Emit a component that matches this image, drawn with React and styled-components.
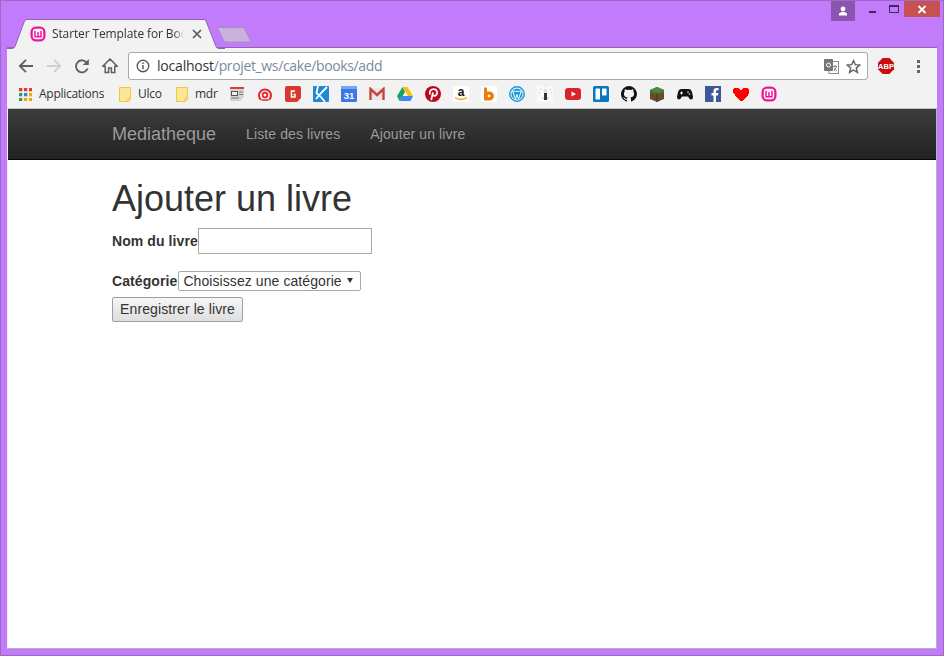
import React from "react";
import styled, { createGlobalStyle } from "styled-components";

const Global = createGlobalStyle`
  html, body { margin: 0; padding: 0; background: #c27cfb; }
  * { box-sizing: border-box; }
`;

const Frame = styled.div`
  width: 944px;
  height: 656px;
  display: flex;
  flex-direction: column;
  background: #c27cfb;
  border: 1px solid #9a6bc4;
  padding: 0 6px 6px;
  overflow: hidden;
`;

const TitleBar = styled.div`
  height: 46px;
  flex: none;
  display: flex;
  align-items: flex-start;
`;

const TabStrip = styled.div`
  display: flex;
  align-items: flex-start;
  margin-top: 18px;
  position: relative;
  z-index: 1;
`;

const Tab = styled.div`
  position: relative;
  width: 218px;
  height: 30px;
  display: flex;
  align-items: center;
  padding: 0 0 1px 23px;
`;

const TabShape = styled.svg`
  position: absolute;
  left: 0;
  top: 0;
`;

const TabFavicon = styled.span`
  position: relative;
  flex: none;
  display: flex;
`;

const TabTitle = styled.span`
  position: relative;
  margin-left: 6px;
  width: 132px;
  overflow: hidden;
  white-space: nowrap;
  font: 12px "Open Sans", sans-serif;
  letter-spacing: -0.12px;
  color: #333;
  -webkit-mask-image: linear-gradient(90deg, #000 122px, transparent 132px);
  mask-image: linear-gradient(90deg, #000 122px, transparent 132px);
`;

const TabClose = styled.svg`
  position: relative;
  margin-left: 8px;
  flex: none;
`;

const NewTab = styled.svg`
  margin: 7px 0 0 -8px;
  flex: none;
`;

const WindowControls = styled.div`
  margin-left: auto;
  margin-right: -3px;
  display: flex;
  align-items: flex-start;
`;

const ProfileButton = styled.div`
  width: 24px;
  height: 20px;
  background: #8a55b0;
  display: flex;
  align-items: center;
  justify-content: center;
  margin-right: 14px;
`;

const Minimize = styled.div`
  width: 7px;
  height: 2px;
  background: #3c2a5e;
  margin: 10px 13px 0 0;
`;

const Maximize = styled.div`
  width: 10px;
  height: 8px;
  border: 1px solid #3c2a5e;
  border-top-width: 2px;
  margin: 4px 5px 0 0;
`;

const CloseButton = styled.div`
  width: 36px;
  height: 16px;
  background: #c75050;
  display: flex;
  align-items: center;
  justify-content: center;
`;

const Browser = styled.div`
  flex: 1;
  display: flex;
  flex-direction: column;
  min-height: 0;
`;

const Toolbar = styled.div`
  height: 33px;
  flex: none;
  background: #f2f2f2;
  border-top: 1px solid #8e63b4;
  display: flex;
  align-items: flex-start;
  padding: 4px 0 0 0;
`;

const NavIcon = styled.svg`
  flex: none;
  margin-top: ${(p) => (p.$mt === undefined ? 6 : p.$mt)}px;
  margin-left: ${(p) => p.$ml || 0}px;
`;

const Omnibox = styled.div`
  width: 740px;
  height: 28px;
  margin-left: 10px;
  background: #fff;
  border: 1px solid #a9a9a9;
  border-radius: 3px;
  display: flex;
  align-items: center;
  padding-left: 7px;
`;

const Url = styled.div`
  margin-left: 7px;
  padding-bottom: 2px;
  flex: 1;
  font: 14px "Open Sans", sans-serif;
  letter-spacing: -0.36px;
  color: #7d8a99;
  white-space: nowrap;
`;

const Host = styled.span`
  color: #333;
  letter-spacing: -0.2px;
`;

const OmniIcon = styled.svg`
  flex: none;
  margin-right: ${(p) => p.$mr || 0}px;
`;

const Bookmarks = styled.div`
  height: 29px;
  flex: none;
  background: #f2f2f2;
  display: flex;
  align-items: center;
  padding: 0 0 0 12px;
  border-bottom: 1px solid #c4c4c4;
`;

const BookmarkText = styled.span`
  font: 12px "Open Sans", sans-serif;
  letter-spacing: -0.27px;
  color: #333;
  padding-bottom: 1px;
  margin-left: ${(p) => p.$ml}px;
  width: ${(p) => p.$w}px;
`;

const Fav = styled.svg`
  flex: none;
  margin-right: ${(p) => (p.$mr === undefined ? 12 : p.$mr)}px;
`;

const FavBox = styled.span`
  display: flex;
  flex: none;
`;

const Page = styled.div`
  flex: 1;
  min-height: 0;
  background: #fff;
  border-left: 1px solid #f0f0f0;
  border-right: 1px solid #b4b4b4;
  border-bottom: 1px solid #b4b4b4;
  font-family: "Liberation Sans", Arial, sans-serif;
  font-size: 14px;
  color: #333;
`;

const Navbar = styled.nav`
  height: 51px;
  padding-left: 104px;
  display: flex;
  align-items: center;
  background: linear-gradient(180deg, #3c3c3c 0%, #222 100%);
  border-bottom: 1px solid #080808;
`;

const Brand = styled.span`
  font-size: 18px;
  color: #9d9d9d;
  text-shadow: 0 -1px 0 rgba(0, 0, 0, 0.25);
  margin-right: 30px;
`;

const NavLink = styled.a`
  font-size: 14px;
  letter-spacing: 0.1px;
  color: #9d9d9d;
  margin-right: 30px;
  text-shadow: 0 -1px 0 rgba(0, 0, 0, 0.25);
`;

const Content = styled.main`
  padding-left: 104px;
`;

const Heading = styled.h1`
  margin: 20px 0 0;
  font-size: 36px;
  line-height: 38px;
  font-weight: 400;
  color: #333;
`;

const Field = styled.div`
  display: flex;
  align-items: center;
  margin-top: ${(p) => p.$mt}px;
`;

const Label = styled.label`
  font-weight: 700;
  letter-spacing: 0.09px;
`;

const TextInput = styled.input`
  width: 174px;
  height: 26px;
  padding: 1px 2px;
  border: 1px solid #a9a9a9;
  background: #fff;
  outline: none;
`;

const SelectWrap = styled.span`
  position: relative;
  display: flex;
  margin-left: 1px;
`;

const Select = styled.select`
  appearance: none;
  height: 20px;
  width: 183px;
  font: 14px "Liberation Sans", Arial, sans-serif;
  letter-spacing: 0.08px;
  color: #333;
  background: #fff;
  border: 1px solid #a9a9a9;
  border-radius: 2px;
  padding: 0 0 0 4px;
`;

const SelectArrow = styled.svg`
  position: absolute;
  right: 8px;
  top: 7px;
  pointer-events: none;
`;

const SubmitButton = styled.button`
  display: block;
  margin-top: 6px;
  width: 131px;
  height: 25px;
  padding: 0 0 2px;
  font: 14px "Liberation Sans", Arial, sans-serif;
  letter-spacing: 0.1px;
  color: #333;
  background: linear-gradient(180deg, #f6f6f6, #dedede);
  border: 1px solid #a0a0a0;
  border-radius: 2px;
`;

const WampIcon = ({ size = 16 }) => (
  <svg width={size} height={size} viewBox="0 0 16 16">
    <rect x="0.5" y="0.5" width="15" height="15" rx="5.5" fill="#f0139a" />
    <rect x="2.8" y="2.8" width="10.4" height="10.4" rx="3" fill="#fff" />
    <path d="M5 4.800v6h6v-6M8 6v4.800" fill="none" stroke="#f0139a" strokeWidth="1.5" />
  </svg>
);

const Folder = (p) => (
  <Fav {...p} width="12" height="16" viewBox="0 0 12 16">
    <path d="M.5 1.500h11v12l-2 2h-9z" fill="#fde694" stroke="#f0c74a" />
    <path d="M9 15v-3h2.500" fill="none" stroke="#f0c74a" />
  </Fav>
);

const APP_COLORS = ["#e53935", "#e53935", "#e53935", "#2f9e5b", "#2f80ed", "#f4a400", "#2f9e5b", "#f4a400", "#f4a400"];

export default function App() {
  return (
    <>
      <Global />
      <Frame>
        <TitleBar>
          <TabStrip>
            <Tab>
              <TabShape width="218" height="30" viewBox="0 0 218 30">
                <path d="M0 29.500h5q2 0 3-2L17.500 2Q18 .5 20 .5H197Q198.500 .5 199 2L209 27.500q1 2 3 2h6V30H0z" fill="#f2f2f2" />
                <path d="M0 29.500h5q2 0 3-2L17.500 2Q18 .5 20 .5H197Q198.500 .5 199 2L209 27.500q1 2 3 2h6" fill="none" stroke="#8e63b4" />
              </TabShape>
              <TabFavicon><WampIcon /></TabFavicon>
              <TabTitle>Starter Template for Bootstrap</TabTitle>
              <TabClose width="10" height="10" viewBox="0 0 10 10">
                <path d="M1 1l8 8M9 1L1 9" stroke="#5a5a5a" strokeWidth="1.7" />
              </TabClose>
            </Tab>
            <NewTab width="35" height="17" viewBox="0 0 35 17">
              <path d="M1.500 1.500H26q1 0 1.500 1L33.500 15q.5 1-1 1H9q-1.500 0-2-1L.8 2.500q-.5-1 .7-1z" fill="#c9b2dd" stroke="#a98ac4" />
            </NewTab>
          </TabStrip>
          <WindowControls>
            <ProfileButton>
              <svg width="10" height="10" viewBox="0 0 10 10">
                <circle cx="5" cy="3" r="2.400" fill="#fff" />
                <path d="M1 9.500V8q0-1 1-1.300L4 6h2l2 .7Q9 7 9 8v1.500z" fill="#fff" />
              </svg>
            </ProfileButton>
            <Minimize />
            <Maximize />
            <CloseButton>
              <svg width="10" height="9" viewBox="0 0 10 9">
                <path d="M1.500 1l7 7M8.500 1l-7 7" stroke="#fff" strokeWidth="1.800" />
              </svg>
            </CloseButton>
          </WindowControls>
        </TitleBar>
        <Browser>
          <Toolbar>
            <NavIcon $ml={11} width="16" height="16" viewBox="0 0 16 16">
              <path d="M15 8H2.500M8 1.800L1.800 8 8 14.200" fill="none" stroke="#5f5f5f" strokeWidth="1.800" />
            </NavIcon>
            <NavIcon $ml={12} width="16" height="16" viewBox="0 0 16 16">
              <path d="M1 8h12.500M8 1.800L14.200 8 8 14.200" fill="none" stroke="#cfcfcf" strokeWidth="1.800" />
            </NavIcon>
            <NavIcon $ml={12} width="16" height="16" viewBox="0 0 16 16">
              <path d="M13.600 10.500A6 6 0 1 1 13 5" fill="none" stroke="#5f5f5f" strokeWidth="1.900" />
              <path d="M14.800 1v6h-6z" fill="#5f5f5f" />
            </NavIcon>
            <NavIcon $ml={12} width="16" height="16" viewBox="0 0 16 16">
              <path d="M8 1L.8 8.200h2.400v6.300h3.400V10h2.800v4.500h3.400V8.200h2.400z" fill="none" stroke="#5f5f5f" strokeWidth="1.500" />
            </NavIcon>
            <Omnibox>
              <OmniIcon width="14" height="14" viewBox="0 0 14 14">
                <circle cx="7" cy="7" r="5.800" fill="none" stroke="#5a5a5a" strokeWidth="1.400" />
                <path d="M7 6v4.200M7 3.600v1.400" stroke="#5a5a5a" strokeWidth="1.500" />
              </OmniIcon>
              <Url>
                <Host>localhost</Host>/projet_ws/cake/books/add
              </Url>
              <OmniIcon $mr={7} width="15" height="15" viewBox="0 0 15 15">
                <rect x="5" y="2.500" width="9.500" height="12" fill="#fff" stroke="#8a8a8a" />
                <rect x="0" y="0" width="9" height="12" rx="1" fill="#757575" />
                <circle cx="4.500" cy="6" r="2" fill="none" stroke="#fff" />
                <path d="M9 7.500h4M11 6v1.500M12.500 7.500L10 12M10 9.500l3 2.500" fill="none" stroke="#777" strokeWidth=".9" />
              </OmniIcon>
              <OmniIcon $mr={6} width="15" height="15" viewBox="0 0 15 15">
                <path d="M7.500 1.600l1.800 4.100 4.400.4-3.400 2.900 1.100 4.400-3.900-2.400-3.900 2.400 1.100-4.400L1.300 6.100l4.400-.4z" fill="none" stroke="#5f5f5f" strokeWidth="1.400" />
              </OmniIcon>
            </Omnibox>
            <NavIcon $ml={10} $mt={6} width="16" height="16" viewBox="0 0 16 16">
              <path d="M4.700 0h6.600L16 4.700v6.600L11.300 16H4.700L0 11.300V4.700z" fill="#c70d0d" />
              <text x="8" y="10.800" textAnchor="middle" fontFamily="Liberation Sans" fontSize="7.500" fontWeight="700" fill="#fff">ABP</text>
            </NavIcon>
            <NavIcon $ml={23} $mt={8} width="4" height="13" viewBox="0 0 4 13">
              <path d="M0 0h3v3H0zM0 5h3v3H0zM0 10h3v3H0z" fill="#666" />
            </NavIcon>
          </Toolbar>
          <Bookmarks>
            <svg width="13" height="13" viewBox="0 0 13 13">
              {APP_COLORS.map((c, i) => (
                <rect key={i} x={(i % 3) * 5} y={Math.floor(i / 3) * 5} width="3.300" height="3.300" fill={c} />
              ))}
            </svg>
            <BookmarkText $ml={7} $w={80}>Applications</BookmarkText>
            <Folder $mr={0} />
            <BookmarkText $ml={7} $w={38}>Ulco</BookmarkText>
            <Folder $mr={0} />
            <BookmarkText $ml={7} $w={35}>mdr</BookmarkText>
            <Fav width="14" height="14" viewBox="0 0 14 14" $mr={14}>
              <path d="M0 0h14v10l-4 4H0z" fill="#d4d4d4" />
              <rect y="0" width="14" height="2" fill="#d2403a" />
              <rect x="1.500" y="4.500" width="6" height="4" fill="#eee" stroke="#555" />
              <path d="M9 5h4M9 7.500h4M1 11h8" stroke="#777" />
            </Fav>
            <Fav width="14" height="14" viewBox="0 0 14 14" $mr={13}>
              <path d="M2.800 12.800A6 6 0 1 1 11.200 12.800" fill="none" stroke="#ea2228" strokeWidth="2" />
              <circle cx="7" cy="8" r="2.400" fill="none" stroke="#ea2228" strokeWidth="1.700" />
              <path d="M3.500 13h7" stroke="#ea2228" strokeWidth="1.500" />
            </Fav>
            <Fav width="16" height="16" viewBox="0 0 16 16">
              <path d="M2 0h12q2 0 2 2v10l-4 4H2q-2 0-2-2V2q0-2 2-2z" fill="#d7392c" />
              <path d="M10 5H6.500v6H10V8.500H8.500" fill="none" stroke="#fff" strokeWidth="1.500" />
            </Fav>
            <Fav width="16" height="16" viewBox="0 0 16 16">
              <rect width="16" height="16" fill="#1e88d8" rx="1" />
              <path d="M5 0L3.500 7 8 11l4 5M14 1L8 7 3 13" fill="none" stroke="#fff" strokeWidth="1.800" />
            </Fav>
            <Fav width="16" height="16" viewBox="0 0 16 16">
              <rect width="16" height="16" rx="1" fill="#3b78e7" />
              <rect width="16" height="3" fill="#7aa6f2" />
              <text x="8" y="13" textAnchor="middle" fontFamily="Liberation Sans" fontSize="9.500" fontWeight="700" fill="#fff">31</text>
            </Fav>
            <Fav width="16" height="14" viewBox="0 0 16 14">
              <path d="M1 1h14v12H1z" fill="#e8e8e8" />
              <path d="M1.500 13V2L8 8l6.500-6v11" fill="none" stroke="#c9453b" strokeWidth="2.400" />
            </Fav>
            <Fav width="16" height="14" viewBox="0 0 16 14">
              <path d="M5.500 0h5l5.500 9h-5z" fill="#f4c20d" />
              <path d="M5.500 0L0 9l2.500 5L8 5z" fill="#1aa260" />
              <path d="M2.500 14h11l2.500-5H5.300z" fill="#4285f4" />
            </Fav>
            <Fav width="16" height="16" viewBox="0 0 16 16">
              <circle cx="8" cy="8" r="8" fill="#bd081c" />
              <path d="M6.200 14L8 6.500M5 8.500C3.800 5.500 6 3.200 8.500 3.200c2.500 0 4 1.800 3.600 4-.4 2.400-2.800 3.500-4.300 2" fill="none" stroke="#fff" strokeWidth="1.800" />
            </Fav>
            <Fav width="16" height="16" viewBox="0 0 16 16">
              <rect width="16" height="16" fill="#fff" />
              <text x="8" y="10" textAnchor="middle" fontFamily="Liberation Sans" fontSize="12" fontWeight="700" fill="#111">a</text>
              <path d="M2 11.500Q8 15.500 14 11.500" fill="none" stroke="#f90" strokeWidth="1.500" />
            </Fav>
            <Fav width="16" height="16" viewBox="0 0 16 16">
              <rect width="16" height="16" fill="#fff" />
              <path d="M3 1.500h3v4h2.500a4 4 0 0 1 0 9H3z" fill="#ef7d0c" />
              <circle cx="8" cy="10" r="1.300" fill="#fff" />
            </Fav>
            <Fav width="16" height="16" viewBox="0 0 16 16">
              <circle cx="8" cy="8" r="7.200" fill="#fff" stroke="#1e9ad6" strokeWidth="1.500" />
              <circle cx="8" cy="8" r="5.600" fill="#1e9ad6" />
              <path d="M3.800 5.500L6.500 13 8 8.500 9.500 13l2.700-7.500M3.200 5.300h3.500M7 5.300h3.500M10.800 5.300h2" fill="none" stroke="#fff" strokeWidth="1" />
            </Fav>
            <Fav width="16" height="16" viewBox="0 0 16 16">
              <rect width="16" height="16" fill="#fafafa" />
              <rect x="7" y="7" width="3" height="7" fill="#333" />
              <circle cx="8.500" cy="5" r="2" fill="#ddd" />
              <path d="M3 3l1 1M14 3l-1 1M8.500 0v1M2 7h1M14 7h1M5 12h2M10 12h2" stroke="#bbb" />
            </Fav>
            <Fav width="16" height="12" viewBox="0 0 16 12">
              <rect width="16" height="12" rx="3" fill="#d9252a" />
              <path d="M6.500 3.500v5L11 6z" fill="#fff" />
            </Fav>
            <Fav width="16" height="16" viewBox="0 0 16 16">
              <rect width="16" height="16" rx="1.500" fill="#0979bf" />
              <rect x="2.500" y="2.500" width="4.500" height="11" rx=".5" fill="#fff" />
              <rect x="9" y="2.500" width="4.500" height="7" rx=".5" fill="#fff" />
            </Fav>
            <Fav width="16" height="16" viewBox="0 0 16 16">
              <path fill="#111" d="M8 0a8 8 0 0 0-2.530 15.590c.4.070.55-.170.550-.380v-1.490c-2.230.490-2.700-.970-2.700-.970-.360-.930-.890-1.170-.890-1.170-.730-.500.050-.490.050-.490.800.060 1.230.830 1.230.830.710 1.230 1.870.870 2.330.660.070-.520.280-.870.510-1.070-1.780-.200-3.640-.890-3.640-3.950 0-.870.310-1.590.820-2.150-.080-.200-.360-1.020.080-2.120 0 0 .670-.210 2.200.820a7.600 7.600 0 0 1 4 0c1.530-1.040 2.200-.820 2.200-.820.440 1.100.160 1.920.080 2.120.510.560.820 1.270.820 2.150 0 3.070-1.870 3.750-3.650 3.950.290.250.540.730.540 1.480v2.190c0 .210.150.460.550.380A8 8 0 0 0 8 0z" />
            </Fav>
            <Fav width="16" height="16" viewBox="0 0 16 16">
              <path d="M1 4l7-3 7 3v9l-7 3-7-3z" fill="#6a4a2e" />
              <path d="M1 4l7-3 7 3-7 3z" fill="#4f8a3a" />
              <path d="M1 4l7 3 7-3v2l-7 3-7-3z" fill="#3f7a30" />
              <path d="M8 7v9" stroke="#4a321e" />
            </Fav>
            <Fav width="16" height="12" viewBox="0 0 16 12">
              <path d="M4 1h8q2 0 3 3l1 5q0 2.500-2 2.500-1.500 0-3-3H5q-1.500 3-3 3-2 0-2-2.500l1-5q1-3 3-3z" fill="#111" />
              <path d="M3 5h3M4.500 3.500v3" stroke="#fff" />
              <circle cx="11" cy="4" r=".8" fill="#fff" />
              <circle cx="12.500" cy="6" r=".8" fill="#fff" />
            </Fav>
            <Fav width="16" height="16" viewBox="0 0 16 16">
              <rect width="16" height="16" fill="#3b5998" />
              <path d="M11 16V9.500h2l.4-2.500H11V5.500q0-1.200 1.300-1.200h1.200V2h-2Q8.500 2 8.500 5v2H6.500v2.500h2V16z" fill="#fff" />
            </Fav>
            <Fav width="16" height="15" viewBox="0 0 16 15" shapeRendering="crispEdges">
              <path d="M1 1h5v1h1v1h2V2h1V1h5v1h1v5h-1v2h-1v1h-1v1h-1v1h-1v1h-1v1H7v-1H6v-1H5v-1H4v-1H3V9H2V7H1v-1H0V2h1z" fill="#ff0000" />
            </Fav>
            <FavBox><WampIcon /></FavBox>
          </Bookmarks>
          <Page>
            <Navbar>
              <Brand>Mediatheque</Brand>
              <NavLink>Liste des livres</NavLink>
              <NavLink>Ajouter un livre</NavLink>
            </Navbar>
            <Content>
              <Heading>Ajouter un livre</Heading>
              <Field $mt={10}>
                <Label>Nom du livre</Label>
                <TextInput />
              </Field>
              <Field $mt={17}>
                <Label>Catégorie</Label>
                <SelectWrap>
                  <Select defaultValue="">
                    <option value="">Choisissez une catégorie</option>
                  </Select>
                  <SelectArrow width="6" height="5" viewBox="0 0 6 5">
                    <path d="M0 0h6L3 5z" fill="#333" />
                  </SelectArrow>
                </SelectWrap>
              </Field>
              <SubmitButton>Enregistrer le livre</SubmitButton>
            </Content>
          </Page>
        </Browser>
      </Frame>
    </>
  );
}
